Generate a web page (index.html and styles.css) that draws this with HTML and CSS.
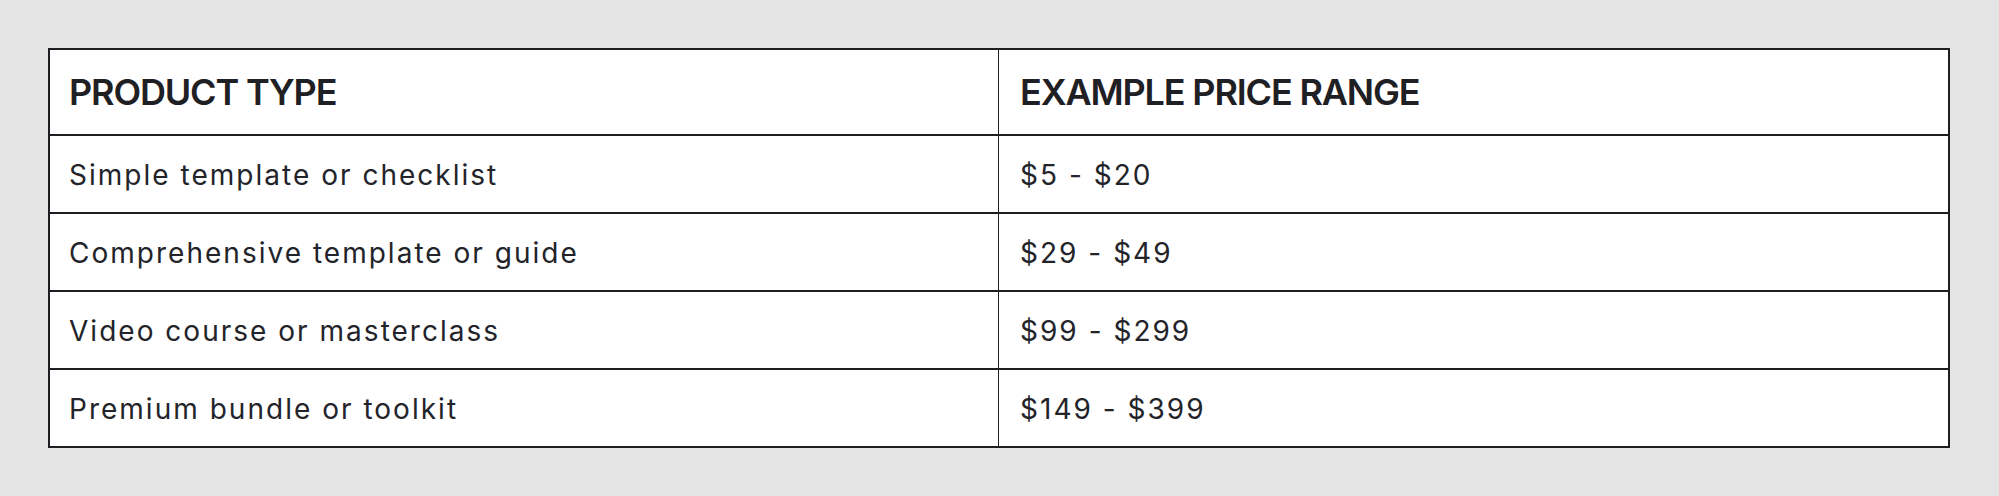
FILE: index.html
```html
<!DOCTYPE html>
<html lang="en">
<head>
<meta charset="utf-8">
<title>Pricing table</title>
<link rel="stylesheet" href="styles.css">
</head>
<body>
<table class="price-table">
  <colgroup>
    <col class="col-half">
    <col class="col-half">
  </colgroup>
  <thead>
    <tr>
      <th class="col-a">PRODUCT TYPE</th>
      <th class="col-b">EXAMPLE PRICE RANGE</th>
    </tr>
  </thead>
  <tbody>
    <tr><td class="col-a">Simple template or checklist</td><td class="col-b">$5 - $20</td></tr>
    <tr><td class="col-a">Comprehensive template or guide</td><td class="col-b">$29 - $49</td></tr>
    <tr><td class="col-a">Video course or masterclass</td><td class="col-b">$99 - $299</td></tr>
    <tr><td class="col-a">Premium bundle or toolkit</td><td class="col-b">$149 - $399</td></tr>
  </tbody>
</table>
</body>
</html>
```

FILE: styles.css
```css
html, body {
  margin: 0;
  padding: 0;
  background: #e4e4e4;
}
body {
  padding: 48px 49px 48px 48px;
  font-family: Inter, "Noto Sans", sans-serif;
  color: #1f2024;
}
.price-table {
  width: 100%;
  border: 2px solid #1e1f23;
  border-collapse: separate;
  border-spacing: 0;
  background: #ffffff;
  table-layout: fixed;
}
.col-half {
  width: 50%;
}
.price-table th,
.price-table td {
  box-sizing: border-box;
  text-align: left;
  padding: 20px 19px;
  vertical-align: middle;
}
.price-table th {
  font-size: 36px;
  font-weight: 600;
  line-height: 44px;
  letter-spacing: -0.032em;
}
.price-table td {
  padding-top: 21px;
  padding-bottom: 19px;
  font-size: 28px;
  font-weight: 400;
  line-height: 36px;
  letter-spacing: 0.072em;
  color: #23242a;
  border-top: 2px solid #1e1f23;
}
.price-table .col-a {
  border-right: 1.5px solid #1e1f23;
}
.price-table .col-b {
  padding-left: 21px;
}
```
